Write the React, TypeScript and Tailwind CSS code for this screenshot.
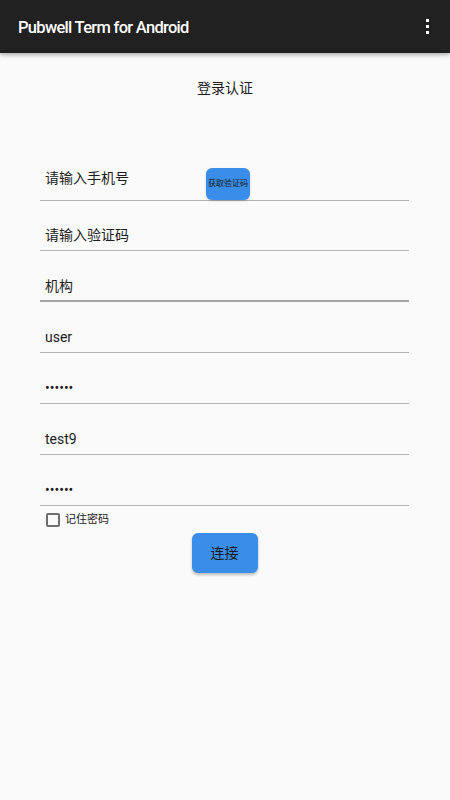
import React from "react";

const sans = "font-['Roboto','Noto_Sans_CJK_SC',sans-serif]";

function Field({
  value,
  strong,
  short,
}: {
  value: string;
  strong?: boolean;
  short?: boolean;
}) {
  return (
    <div
      className={
        (short ? "h-[50px] pt-[24px] " : "h-[51px] pt-[25px] ") +
        "pl-[5px] " +
        (strong ? "border-b-2 border-[#a4a4a4]" : "border-b border-[#b4b4b4]")
      }
    >
      <span className="block text-[14px] leading-[20px] text-[#1c1c1c]">{value}</span>
    </div>
  );
}

export default function App() {
  return (
    <div className={`min-h-[800px] w-[450px] bg-[#fafafa] ${sans}`}>
      {/* toolbar */}
      <div className="relative z-10 flex h-[53px] items-center justify-between bg-[#212121] pl-[18px] pr-[21px] shadow-[0_2px_4px_rgba(0,0,0,0.3)]">
        <span className="mt-[4px] text-[16.5px] font-medium leading-none tracking-[-0.7px] text-white">
          Pubwell Term for Android
        </span>
        <div className="flex flex-col gap-[2.5px]">
          <span className="h-[3.5px] w-[3.5px] bg-white" />
          <span className="h-[3.5px] w-[3.5px] bg-white" />
          <span className="h-[3.5px] w-[3.5px] bg-white" />
        </div>
      </div>

      <div className="pt-[25px] text-center text-[14px] leading-[20px] text-[#1c1c1c]">
        登录认证
      </div>

      <form className="mt-[53px] pl-[40px] pr-[41px]">
        {/* phone + code button */}
        <div className="flex h-[50px] items-start border-b border-[#b4b4b4] pt-[17px]">
          <span className="w-[166px] pl-[5px] text-[14px] leading-[20px] text-[#1c1c1c]">
            请输入手机号
          </span>
          <button
            type="button"
            className="h-[32px] w-[44px] rounded-[6px] bg-[#3a8ee9] text-[8px] leading-none text-[#1a1a1a] shadow-[0_1px_2px_rgba(0,0,0,0.2)]"
          >
            获取验证码
          </button>
        </div>
        <Field value="请输入验证码" short />
        <Field value="机构" strong />
        <Field value="user" />
        <Field value="••••••" />
        <Field value="test9" />
        <Field value="••••••" />

        <label className="mt-[7px] flex items-center gap-[5px] pl-[6px]">
          <span className="h-[14px] w-[14px] rounded-[2px] border-2 border-[#6e6e6e]" />
          <span className="text-[11px] leading-[14px] text-[#1c1c1c]">记住密码</span>
        </label>

        <div className="mt-[6px] flex justify-center">
          <button
            type="button"
            className="h-[40px] w-[66px] rounded-[6px] bg-[#3a8ee9] text-[14px] text-[#1a1a1a] shadow-[0_2px_3px_rgba(0,0,0,0.25)]"
          >
            连接
          </button>
        </div>
      </form>
    </div>
  );
}
